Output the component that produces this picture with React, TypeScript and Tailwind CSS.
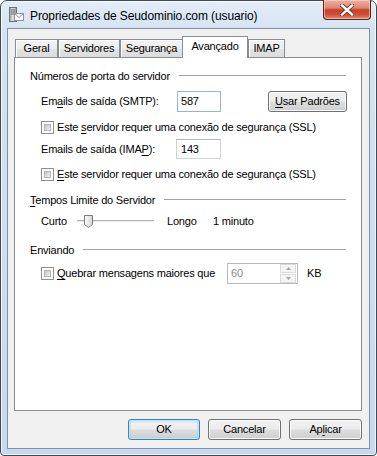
import React from "react";

const U: React.FC<{ children: React.ReactNode }> = ({ children }) => (
  <span className="underline decoration-1 underline-offset-[2px]">{children}</span>
);

const Check: React.FC = () => (
  <span className="flex h-[13px] w-[13px] shrink-0 border border-[#8e8f8f] bg-white p-[2px]">
    <span className="flex-1 border border-[#b3b3b3] bg-[linear-gradient(135deg,#c4c4c4,#f3f3f3)]" />
  </span>
);

const GroupHeader: React.FC<{ children: React.ReactNode }> = ({ children }) => (
  <div className="flex h-[16px] items-center pl-[15px] pr-[15px]">
    <span className="whitespace-nowrap">{children}</span>
    <span className="mb-[2px] ml-[9px] h-px flex-1 bg-[#a3a3a3]" />
  </div>
);

const btnBase =
  "flex h-[21px] items-center justify-center rounded-[3px] border bg-[linear-gradient(to_bottom,#f2f2f2_0%,#ebebeb_48%,#dddddd_52%,#cfcfcf_100%)]";

const Button: React.FC<{ children: React.ReactNode; w: string; primary?: boolean }> = ({
  children,
  w,
  primary,
}) => (
  <div
    className={
      btnBase +
      " " +
      w +
      (primary
        ? " border-[#3c7fb1] shadow-[inset_0_0_0_1px_#c4e5f6,inset_0_0_3px_1px_#9ad3f0]"
        : " border-[#707070] shadow-[inset_0_0_0_1px_#fbfbfb]")
    }
  >
    {children}
  </div>
);

const tabBase = "flex items-center justify-center border border-b-0 border-[#898c95]";

const Tab: React.FC<{ label: string; w: string; active?: boolean }> = ({ label, w, active }) =>
  active ? (
    <div className={tabBase + " relative z-10 -mb-px -ml-px h-[22px] bg-white pb-[3px] " + w}>
      {label}
    </div>
  ) : (
    <div
      className={
        tabBase +
        " h-[18px] bg-[linear-gradient(to_bottom,#f3f3f3_0%,#ededed_50%,#e3e3e3_51%,#dcdcdc_100%)] shadow-[inset_1px_1px_0_#ffffff] " +
        w
      }
    >
      {label}
    </div>
  );

const TitleIcon: React.FC = () => (
  <svg width="16" height="16" viewBox="0 0 16 16">
    <defs>
      <linearGradient id="tw" x1="0" x2="1">
        <stop offset="0" stopColor="#9aa0a6" />
        <stop offset="0.5" stopColor="#e4e6e8" />
        <stop offset="1" stopColor="#8d9399" />
      </linearGradient>
    </defs>
    <rect x="1.5" y="0.5" width="7" height="14" fill="url(#tw)" stroke="#6b7178" />
    <rect x="3" y="2.5" width="4" height="1" fill="#5d646b" />
    <rect x="3" y="4.5" width="4" height="1" fill="#5d646b" />
    <rect x="3" y="6.5" width="4" height="1" fill="#5d646b" />
    <rect x="6.5" y="6.5" width="9" height="7" fill="#fbfbfb" stroke="#8e959c" />
    <path d="M6.5 6.5 L11 10.5 L15.5 6.5" fill="none" stroke="#8e959c" />
  </svg>
);

const CloseGlyph: React.FC = () => (
  <svg width="14" height="12" viewBox="0 0 14 12">
    <path
      d="M2 1.5 L12 10.5 M12 1.5 L2 10.5"
      stroke="#6a3027"
      strokeWidth="4.2"
      strokeLinecap="square"
    />
    <path d="M2 1.5 L12 10.5 M12 1.5 L2 10.5" stroke="#ffffff" strokeWidth="2.4" strokeLinecap="square" />
  </svg>
);

const Slider: React.FC = () => (
  <svg width="77" height="16" viewBox="0 0 77 16">
    <defs>
      <linearGradient id="th" x1="0" x2="1">
        <stop offset="0" stopColor="#fdfdfd" />
        <stop offset="1" stopColor="#d4d4d4" />
      </linearGradient>
    </defs>
    <rect x="0" y="7" width="77" height="1" fill="#b4b4b4" />
    <rect x="0" y="8" width="77" height="1" fill="#e7e7e7" />
    <path d="M7.5 2.5 H15.5 V11.5 L11.5 14.5 L7.5 11.5 Z" fill="url(#th)" stroke="#7a7a7a" />
  </svg>
);

const SpinBox: React.FC = () => (
  <div className="flex h-[21px] w-[71px] items-center border border-[#b6b9bd] bg-white pl-[3px] pr-px">
    <span className="flex-1 text-[#8a8a8a]">60</span>
    <div className="flex h-[19px] w-[16px] flex-col gap-px">
      <div className="flex flex-1 items-center justify-center border border-[#dadada] bg-[#f4f4f4]">
        <svg width="5" height="3" viewBox="0 0 5 3">
          <path d="M0 3 L2.5 0 L5 3 Z" fill="#a5a5a5" />
        </svg>
      </div>
      <div className="flex flex-1 items-center justify-center border border-[#dadada] bg-[#f4f4f4]">
        <svg width="5" height="3" viewBox="0 0 5 3">
          <path d="M0 0 L2.5 3 L5 0 Z" fill="#a5a5a5" />
        </svg>
      </div>
    </div>
  </div>
);

export default function App() {
  return (
    <div className="h-[456px] w-[377px] bg-white font-['Liberation_Sans',Arial,sans-serif] text-[11px] leading-none tracking-[-0.2px] text-black">
      <div className="flex h-[456px] w-[377px] flex-col rounded-t-[7px] rounded-b-[4px] border border-[#3d4a5a] bg-[linear-gradient(to_bottom,#e3edf8_0px,#d5e3f3_28px,#c6d9ee_100%)] shadow-[inset_0_0_0_1px_rgba(255,255,255,0.75)]">
        <div className="flex h-[27px] shrink-0 items-center pl-[7px]">
          <TitleIcon />
          <span className="ml-[6px] pt-[2px] text-[12px] tracking-[-0.1px]">Propriedades de Seudominio.com (usuario)</span>
          <div className="-mt-px mr-[5px] ml-auto flex h-[20px] w-[48px] items-center justify-center self-start rounded-b-[4px] border border-t-0 border-[#5b2217] bg-[linear-gradient(to_bottom,#eeb2a3_0%,#dc8670_42%,#c8412a_52%,#cc4e36_75%,#e48a6e_100%)] shadow-[inset_0_0_0_1px_rgba(255,220,210,0.55)]">
            <CloseGlyph />
          </div>
        </div>

        <div className="mx-[6px] flex h-[421px] flex-col border border-[#7f92a8] bg-[#f0f0f0] pt-[7px] pl-[6px] pr-[7px]">
          <div className="flex h-[21px] items-end pl-px">
            <Tab label="Geral" w="w-[43px]" />
            <Tab label="Servidores" w="w-[62px]" />
            <Tab label="Segurança" w="w-[63px]" />
            <Tab label="Avançado" w="w-[66px]" active />
            <Tab label="IMAP" w="w-[37px]" />
          </div>

          <div className="flex h-[354px] flex-col border border-[#898c95] bg-white pt-[10px]">
            <GroupHeader>Números de porta do servidor</GroupHeader>

            <div className="mt-[7px] flex h-[21px] items-center pl-[26px]">
              <span className="w-[136px]">
                Em<U>a</U>ils de saída (SMTP):
              </span>
              <div className="flex h-[21px] w-[44px] items-center border border-[#93b4d6] bg-white pl-[3px]">587</div>
              <div className="ml-[47px]">
                <Button w="w-[79px]">
                  <U>U</U>sar Padrões
                </Button>
              </div>
            </div>

            <div className="mt-[7px] flex h-[16px] items-center gap-[3px] pl-[26px]">
              <Check />
              <span>
                Este <U>s</U>ervidor requer uma conexão de segurança (SSL)
              </span>
            </div>

            <div className="mt-[4px] flex h-[20px] items-center pl-[26px]">
              <span className="w-[135px]">
                Emails de saída (IMA<U>P</U>):
              </span>
              <div className="flex h-[20px] w-[45px] items-center border border-[#cfd3d8] border-t-[#b4b8bd] bg-white pl-[4px]">143</div>
            </div>

            <div className="mt-[7px] flex h-[16px] items-center gap-[3px] pl-[26px]">
              <Check />
              <span>
                <U>E</U>ste servidor requer uma conexão de segurança (SSL)
              </span>
            </div>

            <div className="mt-[10px]">
              <GroupHeader>
                <U>T</U>empos Limite do Servidor
              </GroupHeader>
            </div>

            <div className="mt-[5px] flex h-[16px] items-center pl-[26px]">
              <span className="w-[36px]">Curto</span>
              <div className="w-[90px]">
                <Slider />
              </div>
              <span className="w-[46px]">Longo</span>
              <span>1 minuto</span>
            </div>

            <div className="mt-[13px]">
              <GroupHeader>Enviando</GroupHeader>
            </div>

            <div className="mt-[5px] flex h-[21px] items-center pl-[26px]">
              <Check />
              <span className="ml-[3px] w-[170px]">
                <U>Q</U>uebrar mensagens maiores que
              </span>
              <SpinBox />
              <span className="ml-[9px]">KB</span>
            </div>
          </div>

          <div className="mt-[8px] flex justify-end gap-[8px]">
            <Button w="w-[72px]" primary>
              OK
            </Button>
            <Button w="w-[73px]">Cancelar</Button>
            <Button w="w-[73px]">
              Ap<U>l</U>icar
            </Button>
          </div>
        </div>
      </div>
    </div>
  );
}
